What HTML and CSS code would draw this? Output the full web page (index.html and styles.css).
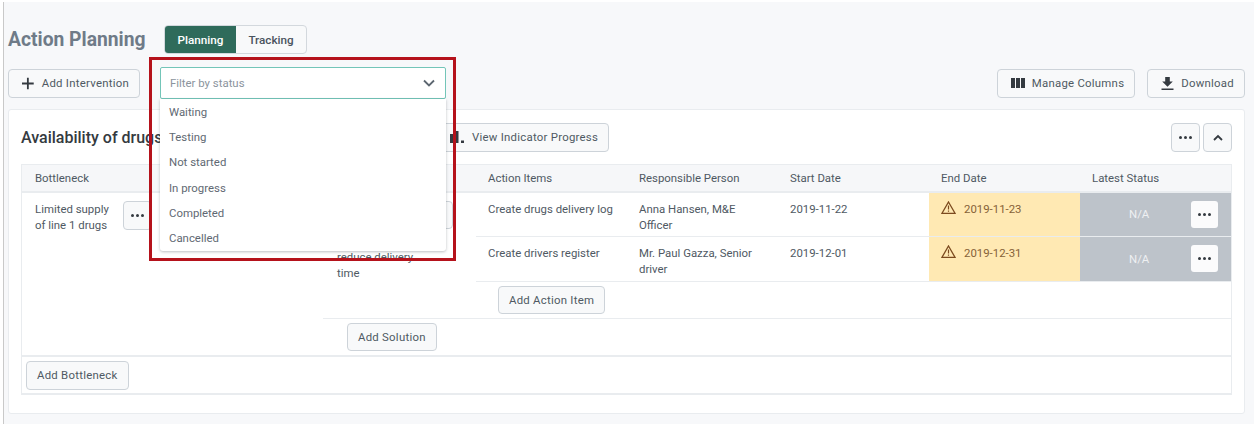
FILE: index.html
```html
<!DOCTYPE html>
<html lang="en">
<head>
    <meta charset="UTF-8">
    <meta name="viewport" content="width=device-width, initial-scale=1.0">
    <title>Action Planning</title>
    <link rel="stylesheet" href="styles.css">
</head>
<body>
    <div class="page">
        <div class="title-row">
            <h1 class="page-title">Action Planning</h1>
            <div class="tabs">
                <div class="tab tab-active">Planning</div>
                <div class="tab">Tracking</div>
            </div>
        </div>

        <div class="toolbar">
            <button class="btn btn-add">
                <svg width="13" height="13" viewBox="0 0 13 13"><path d="M6.500 0v13M0 6.500h13" stroke="#343a40" stroke-width="2" fill="none"/></svg>
                Add Intervention
            </button>
            <div class="toolbar-right">
                <button class="btn btn-wide">
                    <svg width="14" height="10" viewBox="0 0 14 10"><path d="M0 0h4v10H0zM5 0h4v10H5zM10 0h4v10h-4z" fill="#343a40"/></svg>
                    Manage Columns
                </button>
                <button class="btn btn-wide">
                    <svg width="13" height="13" viewBox="0 0 13 13"><path d="M4.200 0h4.600v4.500h3L6.500 9.800 1.200 4.500h3zM.5 11.500h12V13H.5z" fill="#343a40"/></svg>
                    Download
                </button>
            </div>
        </div>

        <div class="card">
            <div class="card-head">
                <h2 class="card-title">Availability of drugs</h2>
                <button class="btn">
                    <svg width="14" height="12" viewBox="0 0 14 12"><path d="M0 3h4v9H0zM5.500 0h3v12h-3zM11 9.500h3V12h-3z" fill="#343a40"/></svg>
                    View Indicator Progress
                </button>
                <div class="card-actions">
                    <button class="btn btn-icon">
                        <svg width="13" height="3" viewBox="0 0 13 3"><path d="M0 1.500a1.500 1.500 0 1 0 3 0a1.500 1.500 0 1 0-3 0M5 1.500a1.500 1.500 0 1 0 3 0a1.500 1.500 0 1 0-3 0M10 1.500a1.500 1.500 0 1 0 3 0a1.500 1.500 0 1 0-3 0" fill="#343a40"/></svg>
                    </button>
                    <button class="btn btn-icon">
                        <svg width="10" height="7" viewBox="0 0 10 7"><path d="M1 6l4-4 4 4" stroke="#343a40" stroke-width="1.800" fill="none"/></svg>
                    </button>
                </div>
            </div>

            <div class="table">
                <div class="table-head">
                    <div class="col-bottleneck">Bottleneck</div>
                    <div class="col-solution"></div>
                    <div class="col">Action Items</div>
                    <div class="col">Responsible Person</div>
                    <div class="col">Start Date</div>
                    <div class="col">End Date</div>
                    <div class="col">Latest Status</div>
                </div>

                <div class="bottleneck-row">
                    <div class="bottleneck-cell">
                        <div class="bottleneck-text">Limited supply of line 1 drugs</div>
                        <button class="btn btn-icon">
                            <svg width="13" height="3" viewBox="0 0 13 3"><path d="M0 1.500a1.500 1.500 0 1 0 3 0a1.500 1.500 0 1 0-3 0M5 1.500a1.500 1.500 0 1 0 3 0a1.500 1.500 0 1 0-3 0M10 1.500a1.500 1.500 0 1 0 3 0a1.500 1.500 0 1 0-3 0" fill="#343a40"/></svg>
                        </button>
                    </div>
                    <div class="solutions">
                        <div class="solution-row">
                            <div class="solution-cell">
                                <div class="solution-text">reduce delivery time</div>
                                <button class="btn btn-icon btn-solution"></button>
                            </div>
                            <div class="actions">
                                <div class="action-row">
                                    <div class="cell">Create drugs delivery log</div>
                                    <div class="cell">Anna Hansen, M&amp;E Officer</div>
                                    <div class="cell">2019-11-22</div>
                                    <div class="cell cell-late">
                                        <svg width="15" height="13" viewBox="0 0 15 13"><path d="M7.500 1L14 12.300H1z" stroke="#7c4a1e" stroke-width="1.300" fill="none"/><path d="M7.500 4.500v4M7.500 9.500v1.300" stroke="#7c4a1e" stroke-width="1.200"/></svg>
                                        2019-11-23
                                    </div>
                                    <div class="cell cell-status">
                                        <span class="status-text">N/A</span>
                                        <button class="btn-more">
                                            <svg width="13" height="3" viewBox="0 0 13 3"><path d="M0 1.500a1.500 1.500 0 1 0 3 0a1.500 1.500 0 1 0-3 0M5 1.500a1.500 1.500 0 1 0 3 0a1.500 1.500 0 1 0-3 0M10 1.500a1.500 1.500 0 1 0 3 0a1.500 1.500 0 1 0-3 0" fill="#343a40"/></svg>
                                        </button>
                                    </div>
                                </div>
                                <div class="action-row">
                                    <div class="cell">Create drivers register</div>
                                    <div class="cell">Mr. Paul Gazza, Senior driver</div>
                                    <div class="cell">2019-12-01</div>
                                    <div class="cell cell-late">
                                        <svg width="15" height="13" viewBox="0 0 15 13"><path d="M7.500 1L14 12.300H1z" stroke="#7c4a1e" stroke-width="1.300" fill="none"/><path d="M7.500 4.500v4M7.500 9.500v1.300" stroke="#7c4a1e" stroke-width="1.200"/></svg>
                                        2019-12-31
                                    </div>
                                    <div class="cell cell-status">
                                        <span class="status-text">N/A</span>
                                        <button class="btn-more">
                                            <svg width="13" height="3" viewBox="0 0 13 3"><path d="M0 1.500a1.500 1.500 0 1 0 3 0a1.500 1.500 0 1 0-3 0M5 1.500a1.500 1.500 0 1 0 3 0a1.500 1.500 0 1 0-3 0M10 1.500a1.500 1.500 0 1 0 3 0a1.500 1.500 0 1 0-3 0" fill="#343a40"/></svg>
                                        </button>
                                    </div>
                                </div>
                                <div class="add-action">
                                    <button class="btn">Add Action Item</button>
                                </div>
                            </div>
                        </div>
                        <div class="add-solution">
                            <button class="btn">Add Solution</button>
                        </div>
                    </div>
                </div>

                <div class="add-bottleneck">
                    <button class="btn">Add Bottleneck</button>
                </div>
            </div>
        </div>
    </div>

    <div class="filter-box">
        <div class="filter-input">
            <span>Filter by status</span>
            <svg width="12" height="8" viewBox="0 0 12 8"><path d="M1 1.500l5 5 5-5" stroke="#5c6670" stroke-width="1.800" fill="none"/></svg>
        </div>
        <ul class="filter-menu">
            <li>Waiting</li>
            <li>Testing</li>
            <li>Not started</li>
            <li>In progress</li>
            <li>Completed</li>
            <li>Cancelled</li>
        </ul>
    </div>
    <div class="highlight"></div>
</body>
</html>
```

FILE: styles.css
```css
* {
    box-sizing: border-box;
}
body {
    margin: 0;
    height: 424px;
    overflow: hidden;
    background: #fff;
    font-family: Roboto, "Liberation Sans", sans-serif;
    font-size: 11.4px;
    color: #4f5963;
}
.page {
    height: 424px;
    margin-top: 2px;
    margin-left: 3px;
    padding: 23px 9px 0 4px;
    background: #f7f8fa;
    border-left: 1px solid #c9c9c9;
}
.title-row {
    display: flex;
    align-items: center;
    height: 29px;
}
.page-title {
    margin: 0;
    width: 157px;
    font-size: 19.3px;
    font-weight: 700;
    color: #6f7b88;
    white-space: nowrap;
}
.tabs {
    display: flex;
    height: 29px;
    margin-left: -1px;
    border: 1px solid #d3d8dd;
    border-radius: 4px;
    background: #f8f9fa;
    font-size: 11.7px;
    font-weight: 500;
    color: #4a545e;
}
.tab {
    display: flex;
    align-items: center;
    padding: 0 12.5px;
}
.tab-active {
    background: #2f6b5b;
    color: #fff;
    border-radius: 3px 0 0 3px;
}
.toolbar {
    display: flex;
    justify-content: space-between;
    margin-top: 15px;
}
.toolbar-right {
    display: flex;
    gap: 12px;
}
.btn {
    display: inline-flex;
    align-items: center;
    justify-content: center;
    gap: 8px;
    height: 28.5px;
    padding: 0 10px;
    border: 1px solid #cdd3d9;
    border-radius: 4px;
    background: #f8f9fa;
    font-family: inherit;
    font-size: 11.4px;
    letter-spacing: 0.25px;
    color: #4f5963;
    white-space: nowrap;
}
.btn-add {
    justify-content: flex-start;
    width: 132px;
    padding-left: 13px;
}
.btn-wide {
    gap: 7px;
    padding-left: 13px;
}
.btn-icon {
    width: 29px;
    padding: 0;
    flex-shrink: 0;
}
.card {
    height: 304.5px;
    margin-top: 11.5px;
    padding: 13px 12px 0;
    background: #fff;
    border: 1px solid #e9ecef;
    border-radius: 3px;
}
.card-head {
    display: flex;
    align-items: center;
}
.card-title {
    margin: 0;
    width: 418px;
    font-size: 16px;
    font-weight: 500;
    color: #343a40;
    white-space: nowrap;
}
.card-actions {
    display: flex;
    gap: 3px;
    margin-left: auto;
}
.table {
    height: 230.5px;
    margin-top: 12.5px;
    border: 1px solid #e9ecef;
    border-bottom-width: 2px;
}
.table-head {
    display: flex;
    align-items: center;
    height: 27.5px;
    background: #f6f7f9;
    border-bottom: 2px solid #e9ecef;
}
.col-bottleneck {
    width: 301px;
    padding-left: 13px;
}
.col-solution {
    width: 153px;
}
.col {
    width: 151px;
    padding-left: 12px;
}
.bottleneck-row {
    display: flex;
    height: 164.5px;
    border-bottom: 2px solid #e9ecef;
}
.bottleneck-cell {
    display: flex;
    gap: 8px;
    width: 301px;
    padding: 8.5px 13px;
}
.bottleneck-text {
    width: 80px;
    line-height: 16px;
}
.solutions {
    flex: 1;
}
.solution-row {
    display: flex;
    height: 126px;
    border-bottom: 1px solid #e9ecef;
}
.solution-cell {
    position: relative;
    width: 153px;
    padding: 56px 14px 0;
    line-height: 16px;
}
.solution-text {
    width: 90px;
}
.btn-solution {
    position: absolute;
    top: 8px;
    right: 23px;
}
.actions {
    flex: 1;
}
.action-row {
    display: flex;
    height: 44.5px;
    border-bottom: 1px solid #e9ecef;
}
.cell {
    width: 151px;
    padding: 8px 12px;
    line-height: 16px;
}
.cell-late {
    display: flex;
    align-items: flex-start;
    gap: 8px;
    background: #ffe9b3;
    color: #866238;
}
.cell-status {
    display: flex;
    align-items: center;
    padding: 0 13px 0 49px;
    background: #bdc3ca;
    color: #eef0f2;
}
.status-text {
    flex: 1;
}
.btn-more {
    display: flex;
    align-items: center;
    justify-content: center;
    width: 27px;
    height: 27px;
    padding: 0;
    border: 0;
    border-radius: 3px;
    background: #fbfbfc;
}
.add-action {
    padding: 4px 0 0 22px;
}
.add-solution {
    padding: 4px 0 0 24px;
}
.add-bottleneck {
    padding: 4px;
}
.filter-box {
    position: absolute;
    left: 160px;
    top: 67px;
    width: 286px;
}
.filter-input {
    display: flex;
    align-items: center;
    justify-content: space-between;
    height: 32px;
    padding: 0 10px 0 9px;
    background: #fff;
    border: 1px solid #73c5b8;
    border-radius: 2px;
    color: #8b949d;
}
.filter-menu {
    margin: 0;
    padding: 0;
    list-style: none;
    background: #fff;
    border-radius: 0 0 3px 3px;
    box-shadow: 0 1px 3px rgba(60, 70, 80, 0.35);
}
.filter-menu li {
    height: 25.4px;
    padding: 5.5px 9px 0;
    color: #5f6973;
}
.highlight {
    position: absolute;
    left: 149px;
    top: 57px;
    width: 307px;
    height: 204px;
    border: 3px solid #b5121b;
}
```
